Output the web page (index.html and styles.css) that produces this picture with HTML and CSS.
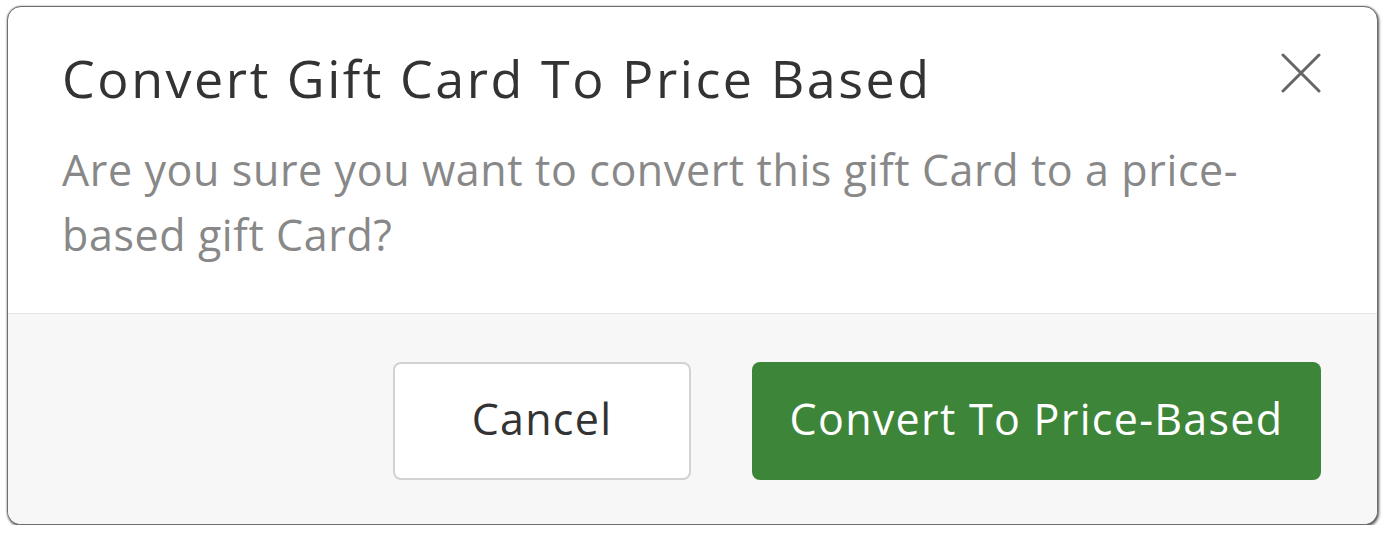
FILE: index.html
```html
<!DOCTYPE html>
<html>
<head>
<meta charset="utf-8">
<link rel="stylesheet" href="styles.css">
</head>
<body>
<div class="modal">
  <div class="modal-body">
    <div class="head">
      <h1 class="title">Convert Gift Card To Price Based</h1>
      <button class="close" aria-label="Close">
        <svg width="40" height="40" viewBox="0 0 40 40"><path d="M2 2 L38 38 M38 2 L2 38" stroke="#666" stroke-width="3" stroke-linecap="round" fill="none"/></svg>
      </button>
    </div>
    <p class="msg">Are you sure you want to convert this gift Card to a price-based gift Card?</p>
  </div>
  <div class="modal-foot">
    <button class="btn btn-cancel">Cancel</button>
    <button class="btn btn-primary">Convert To Price-Based</button>
  </div>
</div>
</body>
</html>
```
FILE: styles.css
```css
html, body {
  margin: 0;
  padding: 0;
  background: #ffffff;
}
body {
  padding: 6px 0 0 7px;
  font-family: "Open Sans", "Liberation Sans", sans-serif;
}
.modal {
  width: 1369px;
  height: 517px;
  border: 1px solid #6e6e6e;
  border-radius: 14px;
  box-shadow: 1px 2px 3px rgba(0,0,0,0.6), 0 0 2px rgba(0,0,0,0.4);
  overflow: hidden;
  display: flex;
  flex-direction: column;
  background: #fff;
}
.modal-body {
  height: 307px;
  border-bottom: 1px solid #e3e3e3;
  padding: 0 56px 0 54px;
  box-sizing: border-box;
}
.head {
  display: flex;
  justify-content: space-between;
  align-items: flex-start;
}
.title {
  margin: 0;
  padding-top: 39px;
  font-size: 52px;
  line-height: 64px;
  letter-spacing: 2.55px;
  font-weight: 400;
  color: #333;
}
.close {
  margin-top: 46px;
  padding: 0;
  border: 0;
  background: none;
  width: 40px;
  height: 40px;
}
.close svg { display: block; }
.msg {
  margin: 27px 0 0 0;
  font-size: 43px;
  line-height: 65px;
  letter-spacing: 0.6px;
  color: #888;
  max-width: 1200px;
}
.modal-foot {
  flex: 1;
  background: #f7f7f7;
  display: flex;
  justify-content: flex-end;
  align-items: flex-start;
  gap: 61px;
  padding: 48px 56px 0 0;
}
.btn {
  height: 118px;
  border-radius: 8px;
  font-family: inherit;
  font-size: 43px;
  letter-spacing: 1.3px;
  padding: 0 0 6px 0;
}
.btn-cancel {
  width: 298px;
  background: #fff;
  border: 2px solid #d2d2d2;
  color: #333;
}
.btn-primary {
  width: 569px;
  background: #3d8539;
  border: 0;
  color: #fff;
}
```
